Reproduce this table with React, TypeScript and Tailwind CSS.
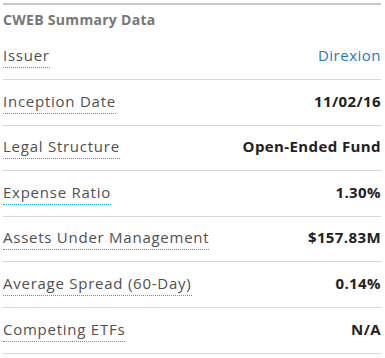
const rows: { label: string; value: string; link?: boolean }[] = [
  { label: "Issuer", value: "Direxion", link: true },
  { label: "Inception Date", value: "11/02/16" },
  { label: "Legal Structure", value: "Open-Ended Fund" },
  { label: "Expense Ratio", value: "1.30%" },
  { label: "Assets Under Management", value: "$157.83M" },
  { label: "Average Spread (60-Day)", value: "0.14%" },
  { label: "Competing ETFs", value: "N/A" },
];

export default function App() {
  return (
    <div className="bg-white w-[385px] h-[358px] pt-[3px] pl-[3px] pr-[4px] font-['Open_Sans',sans-serif]">
      <div className="border-t-2 border-[#c8c8c8]">
        <h3 className="text-[14px] font-bold text-[#777] leading-[16px] tracking-[0.3px] pt-[7px] h-[29.4px]">
          CWEB Summary Data
        </h3>
        {rows.map((r, i) => (
          <div
            key={i}
            className="flex justify-between items-end h-[45.6px] pb-[11px] border-b border-[#d6d6d6]"
          >
            <span className="text-[15px] leading-[20px] tracking-[0.75px] text-[#505050] border-b border-dotted border-[#16aede] pb-[2px]">
              {r.label}
            </span>
            <span
              className={
                r.link
                  ? "text-[15px] leading-[20px] tracking-[0.5px] text-[#1b7dbd] pb-[3px]"
                  : "text-[15px] leading-[20px] tracking-[0.4px] font-bold text-[#222] pb-[3px]"
              }
            >
              {r.value}
            </span>
          </div>
        ))}
      </div>
    </div>
  );
}
